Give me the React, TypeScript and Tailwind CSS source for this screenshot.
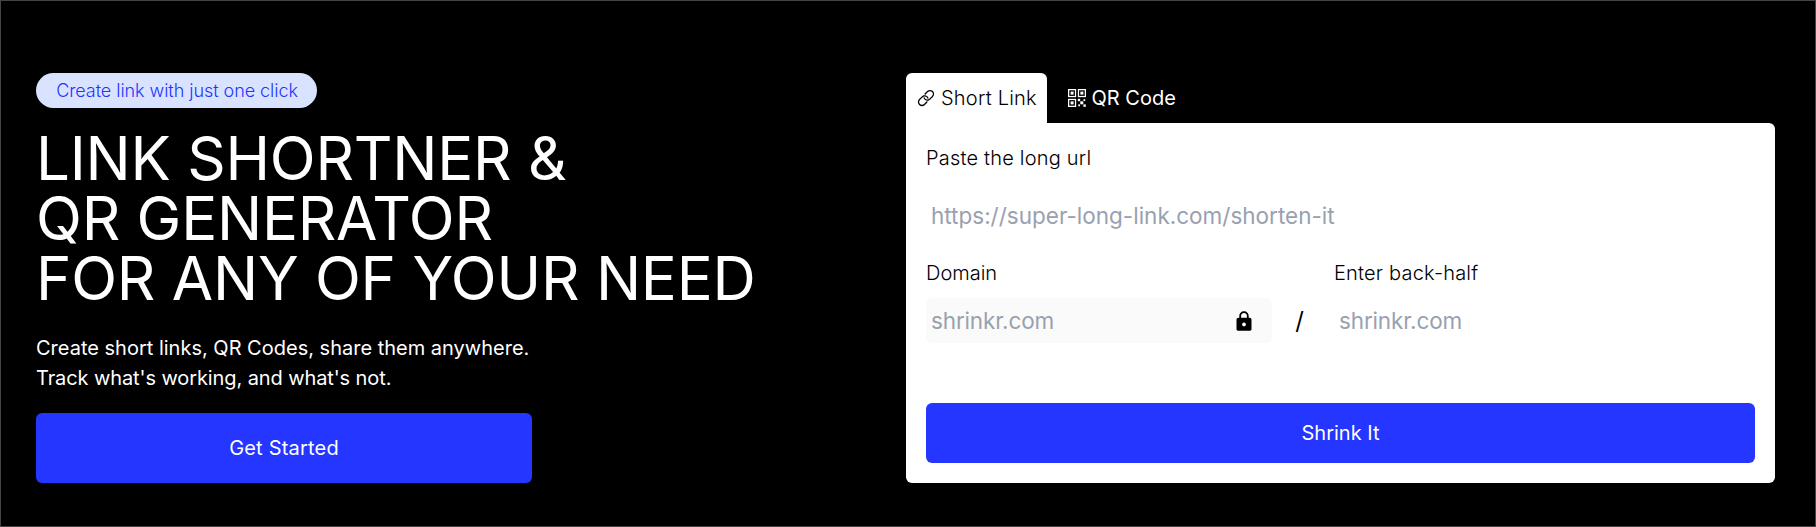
import { IoIosLink, IoMdLock } from "react-icons/io";

function QrIcon() {
  return (
    <svg width="18" height="18" viewBox="0 0 18 18" fill="none" className="shrink-0" aria-hidden="true">
      <g stroke="currentColor" strokeWidth="1.25">
        <rect x="0.63" y="0.63" width="6.9" height="6.9" />
        <rect x="10.47" y="0.63" width="6.9" height="6.9" />
        <rect x="0.63" y="10.47" width="6.9" height="6.9" />
      </g>
      <g fill="currentColor">
        <rect x="2.6" y="2.6" width="3" height="3" />
        <rect x="12.4" y="2.6" width="3" height="3" />
        <rect x="2.6" y="12.4" width="3" height="3" />
        <rect x="12.3" y="12.3" width="3" height="3" />
        <rect x="9.8" y="9.8" width="2.4" height="2.4" />
        <rect x="15.4" y="15.4" width="2.4" height="2.4" />
        <rect x="15.4" y="10.2" width="1.8" height="1.8" />
        <rect x="10.2" y="15.4" width="1.8" height="1.8" />
      </g>
    </svg>
  );
}

function Hero() {
  return (
    <section className="flex w-[870px] shrink-0 flex-col items-start">
      <span className="flex h-[35px] w-[281px] items-center justify-center rounded-full bg-[#d9e3ff] pl-px text-lg leading-none font-light tracking-[-0.05px] text-[#2334ff]">
        Create link with just one click
      </span>
      <h1 className="mt-5 text-[60px] leading-[60px] font-normal tracking-[-0.25px] whitespace-nowrap text-white">
        LINK SHORTNER &amp;
        <br />
        QR GENERATOR
        <br />
        FOR ANY OF YOUR NEED
      </h1>
      <p className="mt-[25px] text-xl leading-[30px] text-white">
        Create short links, QR Codes, share them anywhere.
        <br />
        <span className="tracking-[-0.1px]">Track what's working, and what's not.</span>
      </p>
      <button className="mt-5 h-[70px] w-[496px] rounded-md bg-[#2436ff] text-xl tracking-[0.2px] text-white">
        Get Started
      </button>
    </section>
  );
}

function Tabs() {
  return (
    <div className="flex h-[50px] text-xl">
      <button className="flex w-[141px] items-center gap-[5px] rounded-t-md bg-white pl-2.5 font-light tracking-[0.22px] whitespace-nowrap text-black">
        <IoIosLink size={20} className="shrink-0" />
        Short Link
      </button>
      <button className="flex items-center gap-[5.5px] pl-[21px] whitespace-nowrap text-white">
        <QrIcon />
        QR Code
      </button>
    </div>
  );
}

const inputClass =
  "min-w-0 flex-1 bg-transparent text-[22.5px] leading-9 text-black outline-none placeholder:text-gray-400";
const labelClass = "block h-[30px] text-xl leading-[30px] font-light";

function ShortLinkForm() {
  return (
    <form className="flex h-[360px] flex-col rounded-md rounded-tl-none bg-white px-5 pb-5 text-black">
      <label className={`${labelClass} mt-5 tracking-[0.2px]`}>Paste the long url</label>
      <div className="mt-5 flex h-[45px] items-center rounded-md px-[5px]">
        <input className={inputClass} placeholder="https://super-long-link.com/shorten-it" />
      </div>
      <div className="mt-5 flex">
        <div className="w-[346px]">
          <label className={labelClass}>Domain</label>
          <div className="mt-[10px] flex h-[45px] items-center rounded-md bg-[#fafafa] pr-4 pl-[5px]">
            <input className={`${inputClass} tracking-[-0.15px]`} placeholder="shrinkr.com" />
            <IoMdLock size={24} className="shrink-0" />
          </div>
        </div>
        <span className="mt-[40px] flex h-[45px] w-[62px] items-center justify-center pr-[7px] text-2xl">/</span>
        <div className="flex-1">
          <label className={`${labelClass} tracking-[0.2px]`}>Enter back-half</label>
          <div className="mt-[10px] flex h-[45px] items-center rounded-md px-[5px]">
            <input className={`${inputClass} tracking-[-0.15px]`} placeholder="shrinkr.com" />
          </div>
        </div>
      </div>
      <button type="button" className="mt-auto h-[60px] shrink-0 rounded-md bg-[#2436ff] text-xl text-white">
        Shrink It
      </button>
    </form>
  );
}

export default function App() {
  return (
    <main className="flex h-[527px] w-full border border-[#444444] bg-black pt-[72px] pr-10 pl-[35px] font-['Inter',sans-serif]">
      <Hero />
      <section className="min-w-0 flex-1">
        <Tabs />
        <ShortLinkForm />
      </section>
    </main>
  );
}
